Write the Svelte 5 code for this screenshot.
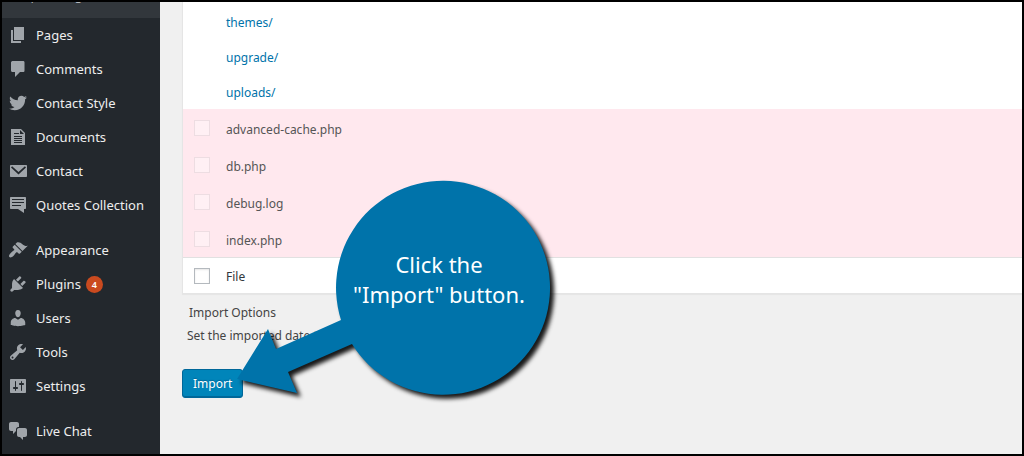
<script>
  const groups = [
    [
      { label: 'Pages', icon: 'page' },
      { label: 'Comments', icon: 'comments' },
      { label: 'Contact Style', icon: 'twitter' },
      { label: 'Documents', icon: 'documents' },
      { label: 'Contact', icon: 'email' },
      { label: 'Quotes Collection', icon: 'quotes' },
    ],
    [
      { label: 'Appearance', icon: 'appearance' },
      { label: 'Plugins', icon: 'plugins', count: 4 },
      { label: 'Users', icon: 'users' },
      { label: 'Tools', icon: 'tools' },
      { label: 'Settings', icon: 'settings' },
    ],
    [{ label: 'Live Chat', icon: 'chat' }],
  ];

  // all icons are on a 20x20 grid
  const icons = {
    page: 'M6 15V2h10v13H6zm-1 1h8v2H3V5h2v11z',
    comments: 'M5 2h10c1 0 1.5.5 1.5 1.5v8c0 1-.5 1.5-1.5 1.5h-3l-5 5v-5H5c-1.1 0-2-.5-2-1.5v-8C3 2.5 4 2 5 2z',
    twitter: 'M18.94 4.46c-.49.73-1.11 1.38-1.83 1.9.01.15.01.31.01.47 0 4.85-3.69 10.44-10.43 10.44-2.07 0-4-.61-5.63-1.65.29.03.58.05.88.05 1.72 0 3.3-.59 4.55-1.57-1.6-.03-2.95-1.09-3.42-2.55.22.04.45.07.69.07.33 0 .66-.05.96-.13-1.67-.34-2.94-1.82-2.94-3.6v-.04c.5.27 1.06.44 1.66.46-.98-.66-1.63-1.78-1.63-3.06 0-.67.18-1.3.5-1.84 1.81 2.22 4.51 3.68 7.56 3.83-.06-.27-.1-.55-.1-.84 0-2.02 1.65-3.66 3.67-3.66 1.06 0 2.01.44 2.68 1.16.83-.17 1.62-.47 2.33-.89-.28.85-.86 1.57-1.62 2.02.75-.08 1.45-.28 2.11-.57z',
    documents: 'M3 2h10l4 4v12H3V2zm9 1v4h4zM6 6v1h5V6H6zm0 3v1h8V9H6zm0 2v1h8v-1H6zm0 2v1h8v-1H6zm0 2v1h8v-1H6z',
    email: 'M3 4h15c.6 0 1 .4 1 1v10c0 .6-.4 1-1 1H3c-.6 0-1-.4-1-1V5c0-.6.4-1 1-1zm1.1 1.3L3 6.4l7.5 7 7.500-7-1.1-1.1-6.4 5.7z',
    quotes: 'M3 2h14c.6 0 1 .4 1 1v10c0 .6-.4 1-1 1h-1v4l-6-4H3c-.6 0-1-.4-1-1V3c0-.6.4-1 1-1zm1 2v1h12V4H4zm0 3v1h12V7H4zm0 3v1h9v-1H4z',
    appearance: 'M14.48 11.06L7.41 3.99l1.5-1.5c.5-.56 2.3-.47 3.51.32 1.21.8 1.43 1.28 2.91 2.1 1.18.64 2.45 1.26 4.45.85zm-.71.71L6.7 4.7 4.93 6.47c-.39.39-.39 1.02 0 1.41l1.06 1.06c.39.39.39 1.03 0 1.42-.6.6-1.43 1.11-2.21 1.69-.35.26-.7.53-1.01.84C1.43 14.23.4 16.08 1.4 17.07c.99 1 2.84-.03 4.18-1.36.31-.31.58-.66.85-1.02.57-.78 1.08-1.61 1.69-2.21.39-.39 1.02-.39 1.41 0l1.06 1.06c.39.39 1.02.39 1.41 0z',
    plugins: 'M13.11 4.36L9.87 7.6 8 5.73l3.24-3.24c.35-.34 1.05-.2 1.56.32.52.51.66 1.21.31 1.55zm-8 1.77l.91-1.12 9.01 9.01-1.19.84c-.71.71-2.63 1.16-3.82 1.16H6.14L4.9 17.26c-.59.59-1.54.59-2.12 0-.59-.58-.59-1.53 0-2.12l1.24-1.24v-3.88c0-1.13.4-3.19 1.09-3.89zm7.26 3.97l3.24-3.24c.34-.35 1.04-.21 1.55.31.52.51.66 1.21.31 1.55l-3.24 3.25z',
    users: 'M10 9.25c-2.27 0-2.73-3.44-2.73-3.44C7 4.02 7.82 2 9.97 2c2.16 0 2.98 2.02 2.71 3.81 0 0-.41 3.44-2.68 3.44zm0 2.57L12.72 10c2.39 0 4.52 2.33 4.52 4.53v2.49s-3.65 1.13-7.24 1.13c-3.65 0-7.24-1.13-7.24-1.13v-2.49c0-2.25 1.94-4.48 4.47-4.48z',
    tools: 'M16.68 9.77c-1.34 1.34-3.3 1.67-4.95.99l-5.41 6.52c-.99.99-2.59.99-3.58 0s-.99-2.59 0-3.57l6.52-5.42c-.68-1.65-.35-3.61.99-4.95 1.28-1.28 3.12-1.62 4.72-1.06l-2.89 2.89 2.82 2.82 2.86-2.87c.53 1.58.18 3.39-1.08 4.65zM3.81 16.21c.4.39 1.04.39 1.43 0 .4-.4.4-1.04 0-1.43-.39-.4-1.03-.4-1.43 0-.39.39-.39 1.03 0 1.43z',
    settings: 'M18 16V4c0-.55-.45-1-1-1H3c-.55 0-1 .45-1 1v12c0 .55.45 1 1 1h14c.55 0 1-.45 1-1zM8 11h1c.55 0 1 .45 1 1s-.45 1-1 1H8v1.5c0 .28-.22.5-.5.5s-.5-.22-.5-.5V13H6c-.55 0-1-.45-1-1s.45-1 1-1h1V5.5c0-.28.22-.5.5-.5s.5.22.5.5V11zm5-2h-1c-.55 0-1-.45-1-1s.45-1 1-1h1V5.5c0-.28.22-.5.5-.5s.5.22.5.5V7h1c.55 0 1 .45 1 1s-.45 1-1 1h-1v5.5c0 .28-.22.5-.5.5s-.5-.22-.5-.5V9z',
    chat: 'M11 6h-.82C9.07 6 8 7.2 8 8.16V10l-3 3v-3H3c-1.1 0-2-.9-2-2V3c0-1.1.9-2 2-2h6c1.1 0 2 .9 2 2v3zm0 1h6c1.1 0 2 .9 2 2v5c0 1.1-.9 2-2 2h-2v3l-3-3h-1c-1.1 0-2-.9-2-2V9c0-1.1.9-2 2-2z',
  };

  const folders = ['themes/', 'upgrade/', 'uploads/'];
  const files = ['advanced-cache.php', 'db.php', 'debug.log', 'index.php'];

  let checkAll = $state(false);
</script>

<div class="screen">
  <nav class="menu" aria-label="Main menu">
    <div class="submenu"><a href="#import-log">Import Log</a></div>
    {#each groups as group}
      <ul>
        {#each group as item}
          <li>
            <a href="#{item.icon}">
              <svg viewBox="0 0 20 20" aria-hidden="true">
                <path fill-rule="evenodd" d={icons[item.icon]} />
              </svg>
              <span>{item.label}</span>
              {#if item.count}<span class="count">{item.count}</span>{/if}
            </a>
          </li>
        {/each}
      </ul>
    {/each}
  </nav>

  <main>
    <table>
      <tbody>
        {#each folders as folder}
          <tr>
            <td class="check"></td>
            <td><a href="#{folder}">{folder}</a></td>
          </tr>
        {/each}
        {#each files as file}
          <tr class="unreadable">
            <td class="check"><input type="checkbox" id={file} disabled /></td>
            <td><label for={file}>{file}</label></td>
          </tr>
        {/each}
      </tbody>
      <tfoot>
        <tr>
          <td class="check"><input type="checkbox" id="check-all" bind:checked={checkAll} /></td>
          <th scope="col"><label for="check-all">File</label></th>
        </tr>
      </tfoot>
    </table>

    <fieldset>
      <legend>Import Options</legend>
      <p>Set the imported date to</p>
    </fieldset>

    <button type="submit">Import</button>
  </main>

  <div class="callout">
    <svg viewBox="0 0 330 230" aria-hidden="true">
      <path d="M9 205 40 155 48 175 113 146A107 107 0 1 1 124 170L60 198 69 219Z" />
    </svg>
    <p>Click the<br />"Import" button.</p>
  </div>
</div>

<style>
  :global(body) {
    margin: 0;
    background: #f0f0f0;
  }

  .screen {
    position: relative;
    display: flex;
    box-sizing: border-box;
    min-height: 100vh;
    border: 2px solid #000;
    overflow: hidden;
    background: #f0f0f0;
    color: #444;
    font-family: 'Noto Sans', 'Open Sans', sans-serif;
    font-size: 12px;
    line-height: 19px;
  }

  /* sidebar */
  .menu {
    flex: none;
    width: 158px;
    background: #23282d;
    font-size: 13px;
  }

  .submenu {
    display: flex;
    align-items: flex-end;
    height: 16px;
    padding-left: 12px;
    overflow: hidden;
    background: #32373c;
  }

  .submenu a {
    padding-bottom: 13px;
    color: #b4b9be;
    text-decoration: none;
  }

  .menu ul {
    margin: 0 0 11px;
    padding: 0;
    list-style: none;
  }

  .menu ul:last-child {
    margin-bottom: 0;
  }

  .menu li a {
    display: flex;
    align-items: center;
    height: 34px;
    padding-left: 6px;
    color: #eee;
    text-decoration: none;
  }

  .menu svg {
    width: 20px;
    height: 20px;
    margin-right: 8px;
    fill: #a0a5aa;
  }

  .count {
    width: 17px;
    height: 17px;
    margin-left: 5px;
    border-radius: 50%;
    background: #ca4a1f;
    color: #fff;
    font-size: 9px;
    font-weight: 600;
    line-height: 17px;
    text-align: center;
  }

  /* file list */
  main {
    flex: 1;
    padding-left: 22px;
  }

  table {
    width: 100%;
    padding-top: 2px;
    border: 1px solid #e5e5e5;
    border-width: 0 0 1px 1px;
    border-spacing: 0;
    background: #fff;
    box-shadow: 0 1px 1px rgba(0, 0, 0, 0.04);
  }

  td,
  th {
    height: 33px;
    padding: 2px 0 0;
    font-weight: 400;
    text-align: left;
  }

  .check {
    width: 43px;
    height: 35px;
    padding: 0;
  }

  td a {
    color: #0073aa;
    text-decoration: none;
  }

  .unreadable td {
    height: 34px;
    padding: 3px 0 0;
    background: #ffe8ee;
    color: #555;
  }

  .unreadable .check {
    height: 37px;
    padding: 0;
  }

  tfoot td,
  tfoot th {
    border-top: 1px solid #e1e1e1;
    color: #32373c;
  }

  input {
    display: block;
    appearance: none;
    box-sizing: border-box;
    width: 16px;
    height: 16px;
    margin: 0 0 0 11px;
    border: 1px solid #b4b9be;
    background: #fff;
    box-shadow: inset 0 1px 2px rgba(0, 0, 0, 0.1);
  }

  input:checked {
    background: #1e8cbe;
  }

  input:disabled {
    border-color: #eddde2;
    background: #fff0f4;
    box-shadow: none;
  }

  fieldset {
    margin: 9px 0 0;
    padding: 0 0 0 5px;
    border: 0;
  }

  legend {
    padding: 0 2px;
  }

  fieldset p {
    margin: 4px 0 0;
  }

  button {
    height: 29px;
    margin-top: 24px;
    padding: 0 10px;
    border: 1px solid #006799;
    border-radius: 3px;
    background: #0085ba;
    box-shadow: inset 0 -1px 0 #006799;
    color: #fff;
    font: inherit;
    text-shadow: 0 -1px 1px #006799;
  }

  /* pointer bubble lying over the page */
  .callout {
    position: absolute;
    top: 172px;
    left: 226px;
    width: 330px;
  }

  .callout svg {
    display: block;
    overflow: visible;
    fill: #0073aa;
    filter: drop-shadow(4px 4px 2px rgba(0, 0, 0, 0.9));
  }

  .callout p {
    position: absolute;
    top: 75px;
    left: 104px;
    width: 214px;
    margin: 0;
    color: #fff;
    font-size: 22px;
    line-height: 30px;
    text-align: center;
  }
</style>
